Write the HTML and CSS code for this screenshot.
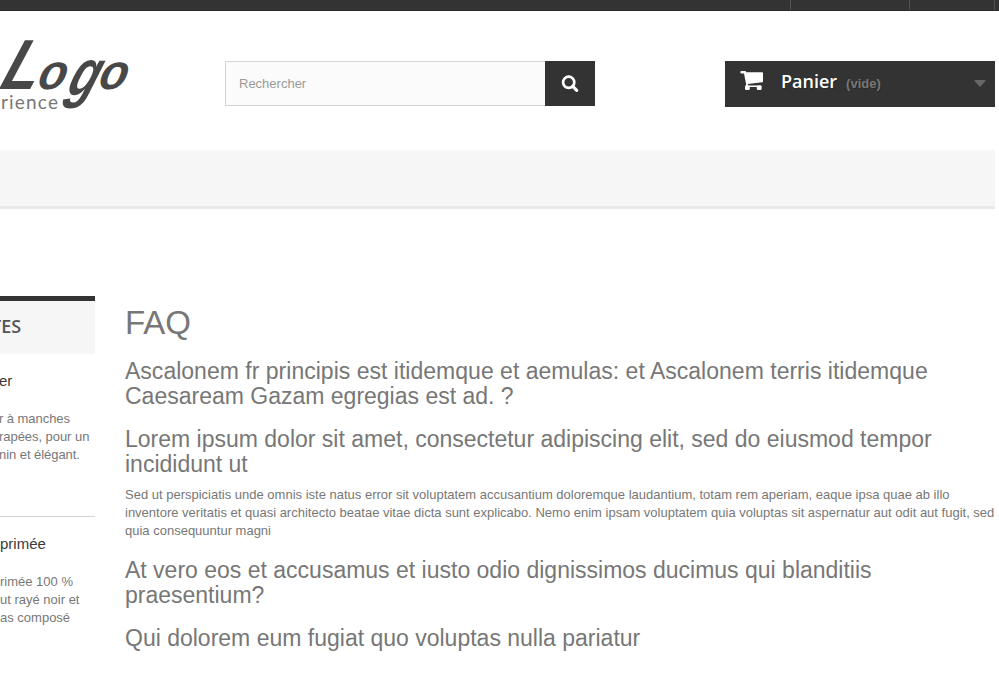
FILE: index.html
```html
<!DOCTYPE html>
<html lang="fr">
<head>
<meta charset="utf-8">
<title>FAQ</title>
<link rel="stylesheet" href="styles.css">
</head>
<body>
<nav class="topbar"><span class="tab"></span><span class="tab tab-wide"></span></nav>
<header class="header">
  <svg class="logo" width="150" height="100" viewBox="0 0 150 100">
    <g class="logo-word">
      <text transform="translate(-2 64) skewX(-20)" font-size="71" textLength="37" lengthAdjust="spacingAndGlyphs">L</text>
      <text transform="translate(36 64) skewX(-14)" font-size="50" textLength="28" lengthAdjust="spacingAndGlyphs">o</text>
      <text transform="translate(65 70) skewX(-20) scale(1 1.3)" font-size="50" textLength="29" lengthAdjust="spacingAndGlyphs">g</text>
      <text transform="translate(97 64) skewX(-14)" font-size="50" textLength="28" lengthAdjust="spacingAndGlyphs">o</text>
    </g>
    <text class="logo-tag" x="1" y="84" textLength="57">rience</text>
  </svg>
  <form class="search">
    <input class="search-input" type="text" placeholder="Rechercher">
    <button class="search-button" type="button" aria-label="Rechercher">
      <svg width="50" height="45" viewBox="0 0 50 45"><circle cx="23.7" cy="21.3" r="5.6" fill="none" stroke="#fff" stroke-width="2.7"/><path d="M27.8 25.4l3.9 4" stroke="#fff" stroke-width="3.2" stroke-linecap="round"/></svg>
    </button>
  </form>
  <a class="cart">
    <svg class="cart-icon" width="24" height="20" viewBox="0 0 24 20"><path d="M1.200 0H5.200Q6 0 6.200 1.300H22.200Q23 1.300 23 2.200V10.400Q23 11.200 22.200 11.300L7.900 13Q8.100 13.800 7.800 14.400H20.500Q21.400 14.400 21.400 15.200T20.500 16.100H6.500Q5.500 16.100 5.600 15.100L6.200 13.500L4 2.500H1.200Q.3 2.400.3 1.300T1.200 0Z"/><rect x="5" y="14.600" width="4.800" height="4.400" rx="1.200"/><rect x="16.800" y="14.600" width="4.800" height="4.400" rx="1.200"/></svg>
    <b class="cart-title">Panier</b><span class="cart-empty">(vide)</span>
    <svg class="cart-arrow" width="12" height="7" viewBox="0 0 12 7"><path d="M.8 0h10.400q.8.300.2 1L6.700 6.300q-.7.700-1.400 0L.6 1Q0 .3.800 0z"/></svg>
  </a>
</header>
<div class="menu"></div>
<div class="columns">
  <aside class="sidebar">
    <h4 class="block-title">TES</h4>
    <section class="product product-first">
      <h5 class="name name-short">er</h5>
      <p class="description description-tight">r à manches<br>rapées, pour un<br>nin et élégant.</p>
    </section>
    <section class="product">
      <h5 class="name">primée</h5>
      <p class="description">rimée 100 %<br>ut rayé noir et<br>as composé</p>
    </section>
  </aside>
  <main class="content">
    <h1>FAQ</h1>
    <h3><span class="wide">Ascalonem fr principis est itidemque et aemulas: et Ascalonem terris itidemque</span><br>Caesaream Gazam egregias est ad. ?</h3>
    <h3>Lorem ipsum dolor sit amet, consectetur adipiscing elit, sed do eiusmod tempor<br>incididunt ut</h3>
    <p>Sed ut perspiciatis unde omnis iste natus error sit voluptatem accusantium doloremque laudantium, totam rem aperiam, eaque ipsa quae ab illo<br>inventore veritatis et quasi architecto beatae vitae dicta sunt explicabo. Nemo enim ipsam voluptatem quia voluptas sit aspernatur aut odit aut fugit, sed<br>quia consequuntur magni</p>
    <h3>At vero eos et accusamus et iusto odio dignissimos ducimus qui blanditiis<br>praesentium?</h3>
    <h3>Qui dolorem eum fugiat quo voluptas nulla pariatur</h3>
  </main>
</div>
</body>
</html>
```

FILE: styles.css
```css
* { box-sizing: border-box; }
body {
  margin: 0;
  height: 686px;
  overflow: hidden;
  background: #fff;
  color: #777;
  font: 13px/18px "Liberation Sans", Arial, sans-serif;
}
.topbar {
  display: flex;
  justify-content: flex-end;
  height: 11px;
  padding-right: 4px;
  background: #333;
  border-bottom: 1px solid #2d2a2d;
}
.tab { width: 119px; border-left: 1px solid #515151; }
.tab-wide { width: 86px; border-right: 1px solid #515151; }
.header {
  display: flex;
  align-items: flex-start;
  height: 139px;
}
.logo { flex: none; width: 150px; margin: 14px 75px 0 0; }
.logo-word {
  fill: #484848;
  font-family: "Liberation Sans", Arial, sans-serif;
  font-weight: bold;
  font-style: italic;
}
.logo-tag { fill: #777; font: 400 19px Lato, sans-serif; }
.search { display: flex; width: 370px; margin-top: 50px; }
.search-input {
  width: 320px;
  height: 45px;
  padding: 0 13px;
  border: 1px solid #d6d4d4;
  border-right: 0;
  border-radius: 0;
  background: #fbfbfb;
  font: 13px "Liberation Sans", Arial, sans-serif;
}
.search-input::placeholder { color: #999; opacity: 1; }
.search-button { width: 50px; height: 45px; padding: 0; border: 0; background: #333; }
.search-button svg { display: block; }
.cart {
  display: flex;
  width: 270px;
  height: 46px;
  margin: 50px 0 0 130px;
  padding: 0 9px 0 15px;
  background: #333;
  text-shadow: 1px 1px rgba(0, 0, 0, .2);
}
.cart-icon { flex: none; margin: 10px 17px 0 0; fill: #fff; }
.cart-title { color: #fff; font: 600 18px/40px "Open Sans", sans-serif; }
.cart-empty { margin-left: 9px; font-weight: bold; line-height: 45px; }
.cart-arrow { margin: 19px 0 0 auto; fill: #686666; }
.menu {
  width: 995px;
  height: 59px;
  background: #f6f6f6;
  border-bottom: 3px solid #e9e9e9;
}
.columns { display: flex; gap: 30px; padding-top: 87px; }
.sidebar { width: 95px; flex: none; white-space: nowrap; }
.block-title {
  height: 58px;
  margin: 0;
  border-top: 5px solid #333;
  background: #f6f6f6;
  color: #555454;
  font: 600 18px/50px "Open Sans", sans-serif;
  text-indent: -9px;
}
.product { padding-top: 18px; }
.product-first { height: 163px; border-bottom: 1px solid #d6d4d4; }
.name { margin: 0 0 20px; color: #3a3939; font-size: 15px; font-weight: normal; line-height: 18px; }
.name-short { text-indent: -1px; }
.description { margin: 0; }
.description-tight { margin-left: -1px; letter-spacing: -.05px; }
.content { width: 874px; padding-top: 9px; white-space: nowrap; }
h1, h3 { margin: 18px 0 9px; font-weight: normal; }
h1 { margin-top: 0; font-size: 33px; line-height: 36px; }
h3 { font-size: 23px; line-height: 25px; }
.wide { letter-spacing: .015px; }
.content p { margin: 0 0 9px; }
```
